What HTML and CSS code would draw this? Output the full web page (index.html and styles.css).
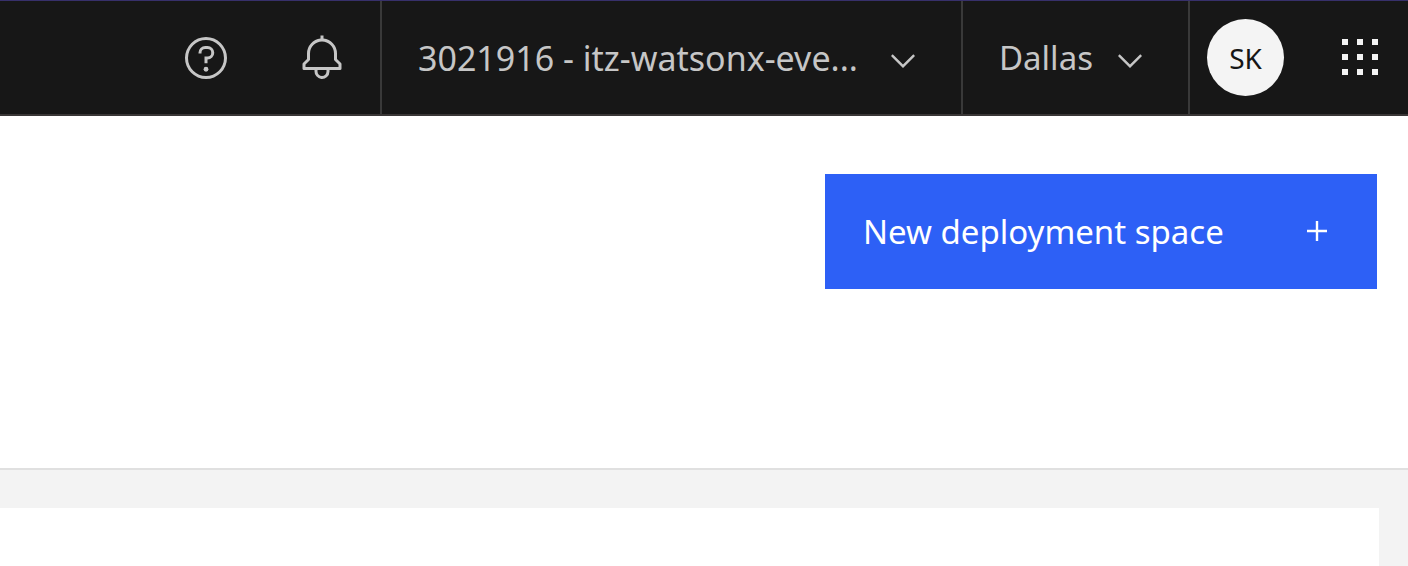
FILE: index.html
```html
<!DOCTYPE html>
<html lang="en">
<head>
<meta charset="utf-8">
<title>Deployments</title>
<link rel="stylesheet" href="styles.css">
</head>
<body>
<header class="header">
  <button class="icon-button" type="button" aria-label="Help">
    <svg class="icon" viewBox="0 0 32 32" aria-hidden="true"><path d="M16,2A14,14,0,1,0,30,16,14,14,0,0,0,16,2Zm0,26A12,12,0,1,1,28,16,12,12,0,0,1,16,28Z"/><circle cx="16" cy="23.5" r="1.6"/><path d="M17,8H15.5A4.49,4.49,0,0,0,11,12.5V13h2v-.5A2.5,2.5,0,0,1,15.5,10H17a2.5,2.5,0,0,1,0,5H15v4.5h2V17a4.5,4.5,0,0,0,0-9Z"/></svg>
  </button>
  <button class="icon-button" type="button" aria-label="Notifications">
    <svg class="icon" viewBox="0 0 32 32" aria-hidden="true"><path d="M28.7071,19.293,26,16.5859V13a10.0136,10.0136,0,0,0-9-9.9492V1H15V3.0508A10.0136,10.0136,0,0,0,6,13v3.5859L3.2929,19.293A1,1,0,0,0,3,20v3a1,1,0,0,0,1,1h7v.7768a5.152,5.152,0,0,0,4.5,5.1987A5.0057,5.0057,0,0,0,21,25V24h7a1,1,0,0,0,1-1V20A1,1,0,0,0,28.7071,19.293ZM19,25a3,3,0,0,1-6,0V24h6Zm8-3H5V20.4141L7.707,17.707A1,1,0,0,0,8,17V13a8,8,0,0,1,16,0v4a1,1,0,0,0,.293.707L27,20.4141Z"/></svg>
  </button>
  <button class="switcher account" type="button">
    <span>3021916 - itz-watsonx-eve...</span>
    <svg class="chevron" viewBox="3 5.2 10 5.8" aria-hidden="true"><path d="M8 11L3 6 3.7 5.3 8 9.6 12.3 5.3 13 6z"/></svg>
  </button>
  <button class="switcher region" type="button">
    <span>Dallas</span>
    <svg class="chevron" viewBox="3 5.2 10 5.8" aria-hidden="true"><path d="M8 11L3 6 3.7 5.3 8 9.6 12.3 5.3 13 6z"/></svg>
  </button>
  <div class="user">
    <button class="avatar" type="button">SK</button>
    <button class="apps" type="button" aria-label="App switcher">
      <svg class="apps-icon" viewBox="0 0 36 37" aria-hidden="true"><path d="M0 0h6v6H0zM15 0h6v6h-6zM30 0h6v6h-6zM0 15h6v6H0zM15 15h6v6h-6zM30 15h6v6h-6zM0 30h6v6H0zM15 30h6v6h-6zM30 30h6v6h-6z"/></svg>
    </button>
  </div>
</header>
<main class="main">
  <section class="toolbar">
    <button class="primary" type="button">
      <span>New deployment space</span>
      <svg class="plus" viewBox="0 0 20 21" aria-hidden="true"><path d="M8.8 0h2.4v8.8H20v2.4h-8.8V20H8.8v-8.8H0V8.8h8.8z"/></svg>
    </button>
  </section>
  <section class="content">
    <div class="panel"></div>
  </section>
</main>
</body>
</html>
```

FILE: styles.css
```css
* {
  box-sizing: border-box;
}

body {
  margin: 0;
  min-height: 100vh;
  display: flex;
  flex-direction: column;
  background: #ffffff;
  font-family: "Noto Sans", "Open Sans", sans-serif;
  font-size: 33px;
  line-height: 44px;
}

button {
  margin: 0;
  padding: 0;
  border: 0;
  background: none;
  color: inherit;
  font: inherit;
  cursor: pointer;
}

svg {
  display: block;
  flex: none;
  fill: currentColor;
}

.header {
  display: flex;
  justify-content: flex-end;
  height: 116px;
  border-top: 1px solid #37306b;
  border-bottom: 2px solid #393636;
  background: #171717;
  color: #c6c6c6;
}

.icon-button {
  display: flex;
  align-items: center;
  justify-content: center;
  width: 116px;
}

.icon {
  width: 48px;
  height: 48px;
}

.switcher {
  display: flex;
  align-items: center;
  justify-content: space-between;
  padding: 0 46px 0 36px;
  border-left: 2px solid #393939;
  white-space: nowrap;
}

.account {
  width: 581px;
  font-size: 34px;
}

.region {
  width: 227px;
}

.chevron {
  width: 24px;
  height: 14px;
  margin-top: 6px;
}

.user {
  display: flex;
  align-items: center;
  justify-content: space-between;
  width: 220px;
  padding: 0 30px 0 17px;
  border-left: 2px solid #393939;
}

.avatar {
  width: 77px;
  height: 77px;
  border-radius: 50%;
  background: #f4f4f4;
  color: #161616;
  font-size: 28px;
}

.apps {
  color: #f4f4f4;
}

.apps-icon {
  width: 36px;
  height: 37px;
}

.main {
  flex: 1;
  display: flex;
  flex-direction: column;
}

.toolbar {
  display: flex;
  justify-content: flex-end;
  padding: 58px 31px 179px;
  border-bottom: 2px solid #e0e0e0;
}

.primary {
  display: flex;
  align-items: center;
  justify-content: space-between;
  width: 552px;
  height: 115px;
  padding: 0 50px 0 38px;
  background: #2d60f6;
  color: #ffffff;
  white-space: nowrap;
}

.plus {
  width: 20px;
  height: 21px;
}

.content {
  flex: 1;
  display: flex;
  padding: 38px 29px 0 0;
  background: #f3f3f3;
}

.panel {
  flex: 1;
  background: #ffffff;
}
```
